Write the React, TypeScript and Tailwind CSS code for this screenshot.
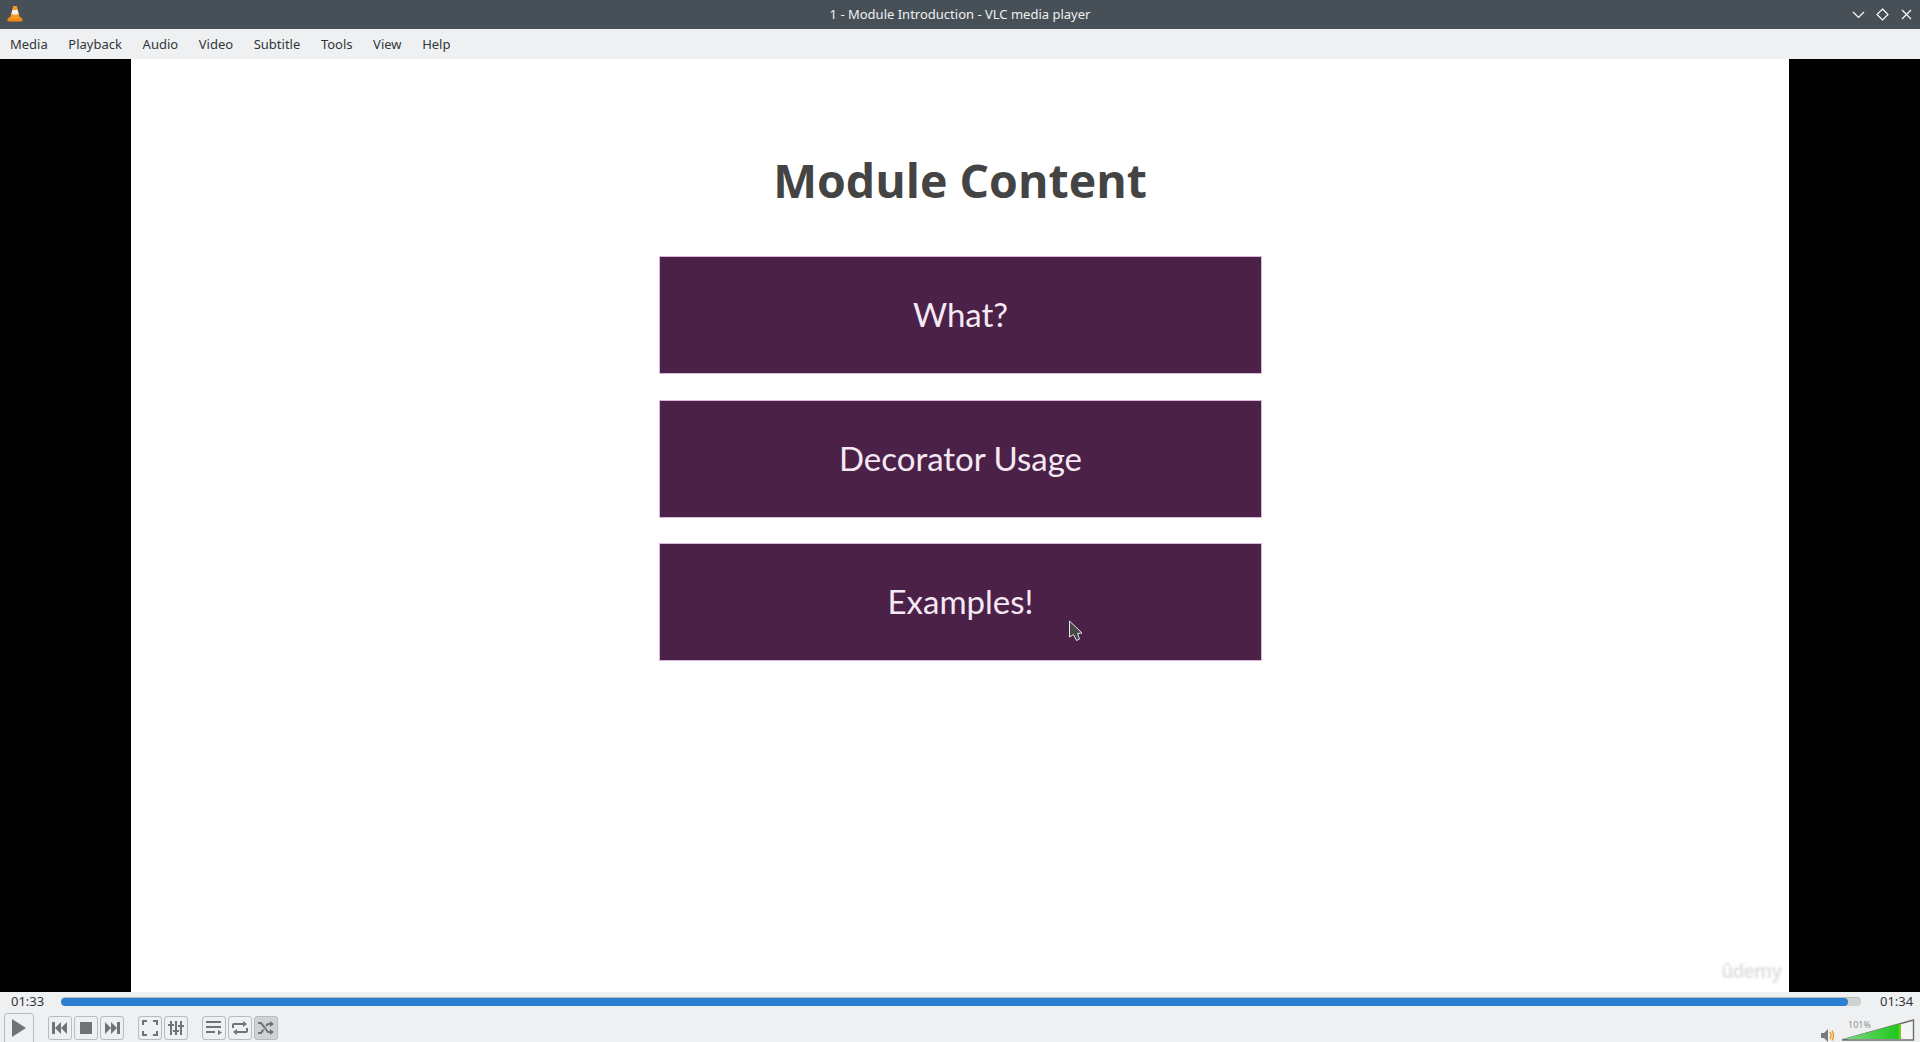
import React from "react";

const menus = ["Media", "Playback", "Audio", "Video", "Subtitle", "Tools", "View", "Help"];
const slides = ["What?", "Decorator Usage", "Examples!"];

function VlcCone() {
  return (
    <svg width="18" height="18" viewBox="0 0 18 18">
      <path d="M1.5 14 L3.5 12 H14.5 L16.5 14 Q17 16.5 15 16.5 H3 Q1 16.5 1.5 14Z" fill="#f08a14" />
      <path d="M7.3 1 H10.7 L14 13 Q9 15 4 13Z" fill="#f59a22" />
      <path d="M6.5 4.5 Q9 5.6 11.5 4.5 L12.6 9 Q9 10.6 5.4 9Z" fill="#f4f1ec" />
    </svg>
  );
}

function CtrlButton({ children, active }: { children: React.ReactNode; active?: boolean }) {
  return (
    <div
      className={
        "w-[24px] h-[24px] flex items-center justify-center rounded-[3px] border border-[#b9bbbd] " +
        (active ? "bg-[#cfd1d3]" : "bg-[#eff0f1]")
      }
    >
      {children}
    </div>
  );
}

const iconGray = "#707376";

export default function App() {
  return (
    <div className="w-[1920px] h-[1042px] flex flex-col overflow-hidden bg-[#eff0f1] font-['Noto_Sans',sans-serif]">
      {/* Title bar */}
      <div className="relative h-[29px] shrink-0 bg-[#475057] flex items-center justify-center">
        <div className="absolute left-[6px] top-[5px]">
          <VlcCone />
        </div>
        <span className="text-[13px] text-[#eff0f1]">1 - Module Introduction - VLC media player</span>
        <div className="absolute right-[6.5px] top-[6.5px] flex items-center gap-[9px]">
          <svg width="15" height="15" viewBox="0 0 15 15" fill="none" stroke="#fcfcfc" strokeWidth="1.2">
            <path d="M2 5 L7.5 10.5 L13 5" />
          </svg>
          <svg width="15" height="15" viewBox="0 0 15 15" fill="none" stroke="#fcfcfc" strokeWidth="1.2">
            <path d="M7.5 2 L13 7.5 L7.5 13 L2 7.5Z" />
          </svg>
          <svg width="15" height="15" viewBox="0 0 15 15" fill="none" stroke="#fcfcfc" strokeWidth="1.2">
            <path d="M3 3 L12 12 M12 3 L3 12" />
          </svg>
        </div>
      </div>

      {/* Menu bar */}
      <div className="h-[30px] shrink-0 flex items-center gap-[20.6px] pl-[10px] pt-[2px] text-[13px] text-[#31363b]">
        {menus.map((m) => (
          <span key={m}>{m}</span>
        ))}
      </div>

      {/* Video */}
      <div className="h-[933px] shrink-0 flex bg-black">
        <div className="relative w-[1658px] ml-[131px] bg-white flex flex-col items-center">
          <h1 className="mt-[84px] h-[75px] text-[46.5px] leading-[75px] font-bold text-[#444444] font-['Open_Sans',sans-serif]">
            Module Content
          </h1>
          <div className="mt-[38px] flex flex-col gap-[25.5px] pl-[1px]">
            {slides.map((s) => (
              <div
                key={s}
                className="w-[603px] h-[118px] flex items-center justify-center bg-[#4c2148] border border-[#d9b9d9] text-[33px] text-[#f5e9f5] font-['Lato',sans-serif]"
              >
                {s}
              </div>
            ))}
          </div>
          <span className="absolute left-[1590px] top-[899px] text-[19px] leading-[26px] tracking-[-1px] font-bold text-[#e2e2e2] font-['Open_Sans',sans-serif] blur-[1px]">
            ûdemy
          </span>
          {/* mouse pointer captured in the video */}
          <svg className="absolute left-[937px] top-[561px]" width="16" height="22" viewBox="0 0 16 22">
            <path d="M1.5 1 V17 L5.5 14.5 L8.5 20.5 L11.5 19 L9.5 13.5 L14 13Z" fill="#484848" stroke="#e8e8e8" strokeWidth="1" />
          </svg>
        </div>
      </div>

      {/* Seek row */}
      <div className="h-[21px] shrink-0 flex items-center pb-[2px] text-[13px] text-[#31363b]">
        <span className="w-[61px] pl-[11px]">01:33</span>
        <div className="w-[1800px] h-[9px] rounded-[4px] bg-[#cfd1d3] overflow-hidden border-t border-[#b5b7b9]">
          <div className="w-[1787px] h-full rounded-[4px] bg-[#2a7fd2]" />
        </div>
        <span className="ml-[19px]">01:34</span>
      </div>

      {/* Controls */}
      <div className="h-[29px] shrink-0 flex items-start pl-[4px]">
        <div className="w-[30px] h-[32px] flex items-center justify-center rounded-[3px] border border-[#b9bbbd] pb-[3px]">
          <svg width="16" height="18" viewBox="0 0 16 18">
            <path d="M1 0 L15 9 L1 18Z" fill={iconGray} />
          </svg>
        </div>

        <div className="ml-[14px] mt-[3px] flex gap-[2px]">
          <CtrlButton>
            <svg width="16" height="12" viewBox="0 0 16 12" fill={iconGray}>
              <path d="M0 0 H3 V12 H0Z M9 0 V12 L3 6Z M15 0 V12 L9 6Z" />
            </svg>
          </CtrlButton>
          <CtrlButton>
            <svg width="12" height="12" viewBox="0 0 12 12" fill={iconGray}>
              <path d="M0 0 H12 V12 H0Z" />
            </svg>
          </CtrlButton>
          <CtrlButton>
            <svg width="16" height="12" viewBox="0 0 16 12" fill={iconGray}>
              <path d="M1 0 L7 6 L1 12Z M7 0 L13 6 L7 12Z M13 0 H16 V12 H13Z" />
            </svg>
          </CtrlButton>
        </div>

        <div className="ml-[14px] mt-[3px] flex gap-[2px]">
          <CtrlButton>
            <svg width="16" height="16" viewBox="0 0 16 16" fill="none" stroke={iconGray} strokeWidth="2">
              <path d="M1 5 V1 H5 M11 1 H15 V5 M15 11 V15 H11 M5 15 H1 V11" />
            </svg>
          </CtrlButton>
          <CtrlButton>
            <svg width="16" height="16" viewBox="0 0 16 16" fill={iconGray}>
              <path d="M2 1 H4 V15 H2Z M7 1 H9 V15 H7Z M12 1 H14 V15 H12Z M0 4 H6 V6 H0Z M5 10 H11 V12 H5Z M10 5 H16 V7 H10Z" />
            </svg>
          </CtrlButton>
        </div>

        <div className="ml-[14px] mt-[3px] flex gap-[2px]">
          <CtrlButton>
            <svg width="16" height="14" viewBox="0 0 16 14" fill={iconGray}>
              <path d="M0 0 H15 V2 H0Z M0 5 H15 V7 H0Z M0 10 H9 V12 H0Z M12 9 L16 11.5 L12 14Z" />
            </svg>
          </CtrlButton>
          <CtrlButton>
            <svg width="16" height="14" viewBox="0 0 16 14" fill="none" stroke={iconGray} strokeWidth="2">
              <path d="M1 7 V4 Q1 3 2 3 H13 M15 7 V10 Q15 11 14 11 H3" />
              <path d="M11 0 L15 3 L11 6Z M5 8 L1 11 L5 14Z" fill={iconGray} stroke="none" />
            </svg>
          </CtrlButton>
          <CtrlButton active>
            <svg width="16" height="14" viewBox="0 0 16 14" fill="none" stroke={iconGray} strokeWidth="2">
              <path d="M0 2 H3 L10 11 H13 M0 12 H3 L5.5 8.5 M8 5 L10 3 H13" />
              <path d="M12 0 L16 3 L12 6Z M12 8 L16 11 L12 14Z" fill={iconGray} stroke="none" />
            </svg>
          </CtrlButton>
        </div>

        {/* Volume */}
        <div className="ml-auto flex mt-[-4px] pr-[5px] items-end h-[32px]">
          <svg width="14" height="13" viewBox="0 0 14 13" className="mb-[-1px]">
            <path d="M0 4 H3 L7 0 V13 L3 9 H0Z" fill="#77797b" />
            <path d="M9 3 Q11 6.5 9 10 M11 1.5 Q14 6.5 11 11.5" fill="none" stroke="#f08a14" strokeWidth="1.3" />
          </svg>
          <div className="relative ml-[6px] w-[74px] h-[22px]">
            <svg width="74" height="22" viewBox="0 0 74 22" className="absolute inset-0">
              <defs>
                <linearGradient id="vol" x1="0" x2="1" y1="0" y2="0">
                  <stop offset="0" stopColor="#7fd77f" />
                  <stop offset="0.94" stopColor="#1fc81f" />
                  <stop offset="1" stopColor="#9ac81a" />
                </linearGradient>
              </defs>
              <path d="M1 21 L72.5 1 V21Z" fill="#f4f5f5" stroke="#6e6e6e" strokeWidth="1.4" />
              <path d="M3 20 L60 4.6 V20Z" fill="url(#vol)" />
            </svg>
            <span className="absolute left-[7px] top-[0px] text-[9px] leading-[12px] text-[#8e9195]">101%</span>
          </div>
        </div>
      </div>
    </div>
  );
}
